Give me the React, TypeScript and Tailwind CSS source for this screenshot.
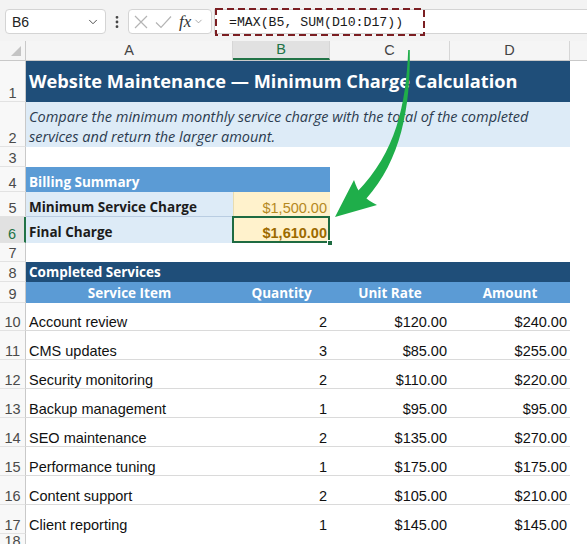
import type { ReactNode } from 'react';
import { ChevronDown, EllipsisVertical } from 'lucide-react';

const grid = 'grid grid-cols-[26px_207px_97px_120px_120px_1fr]';
const heading = "font-['Open_Sans',sans-serif] font-bold leading-none";
const body = "font-['Liberation_Sans',Arial,sans-serif] leading-none";

const services = [
  { item: 'Account review', qty: 2, rate: '$120.00', amount: '$240.00' },
  { item: 'CMS updates', qty: 3, rate: '$85.00', amount: '$255.00' },
  { item: 'Security monitoring', qty: 2, rate: '$110.00', amount: '$220.00' },
  { item: 'Backup management', qty: 1, rate: '$95.00', amount: '$95.00' },
  { item: 'SEO maintenance', qty: 2, rate: '$135.00', amount: '$270.00' },
  { item: 'Performance tuning', qty: 1, rate: '$175.00', amount: '$175.00' },
  { item: 'Content support', qty: 2, rate: '$105.00', amount: '$210.00' },
  { item: 'Client reporting', qty: 1, rate: '$145.00', amount: '$145.00' },
];

function RowHead({ n, selected }: { n: number; selected?: boolean }) {
  return (
    <div
      className={`${body} flex items-end justify-center pb-[1px] text-[14.5px] border-b border-b-[#e2e2e2] ${
        selected
          ? 'bg-[#e1e1e1] text-[#217346] border-r-2 border-r-[#217346]'
          : 'bg-[#f8f8f8] text-[#4a4a4a] border-r border-r-[#c9c9c9]'
      }`}
    >
      {n}
    </div>
  );
}

function Row({ n, h, selected, children }: { n: number; h: string; selected?: boolean; children?: ReactNode }) {
  return (
    <div className={`${grid} ${h}`}>
      <RowHead n={n} selected={selected} />
      {children}
    </div>
  );
}

function FormulaBar() {
  return (
    <div className="flex h-[41px] items-start bg-[#f3f3f3] pl-[5px] pt-[9px]">
      <div className="flex h-[25px] w-[101px] items-center justify-between rounded-[4px] border border-[#d4d4d4] bg-white pl-[6px] pr-[5px]">
        <span className={`${body} text-[14px] text-[#222]`}>B6</span>
        <ChevronDown size={14} strokeWidth={1.6} className="text-[#444]" />
      </div>
      <div className="flex h-[25px] w-[22px] items-center justify-center text-[#444]">
        <EllipsisVertical size={16} strokeWidth={2.2} />
      </div>
      <div className="flex h-[25px] w-[84px] items-center gap-[7px] rounded-[4px] border border-[#d4d4d4] bg-white pl-[5px]">
        <svg width="14" height="14" viewBox="0 0 14 14" className="text-[#b4b4b4]">
          <path d="M1 1 L13 13 M13 1 L1 13" stroke="currentColor" strokeWidth="1.2" fill="none" />
        </svg>
        <svg width="17" height="14" viewBox="0 0 17 14" className="text-[#b4b4b4]">
          <path d="M1 7.5 L6 12.5 L16 1.5" stroke="currentColor" strokeWidth="1.2" fill="none" />
        </svg>
        <span className="font-['Liberation_Serif',serif] text-[17px] italic leading-none text-[#333]">fx</span>
        <ChevronDown size={11} strokeWidth={1.5} className="-ml-[5px] text-[#888]" />
      </div>
      <div className="relative ml-[2px] h-[25px] flex-1 border-y border-l border-[#d4d4d4] bg-white">
        <span className="absolute left-[14px] top-[3px] font-['Liberation_Mono',monospace] text-[13.2px] text-[#1a1a1a]">
          =MAX(B5, SUM(D10:D17))
        </span>
        <svg width="212" height="28" className="absolute -left-[1px] -top-[2px]">
          <rect x="2" y="1" width="208" height="26" fill="none" stroke="#7b1e22" strokeWidth="2" strokeDasharray="7 4" />
        </svg>
      </div>
    </div>
  );
}

function ColumnHeaders() {
  const cell = `${body} flex items-center justify-center text-[14.5px] border-r border-[#d6d6d6]`;
  return (
    <div className={`${grid} h-[20px] border-b border-[#c9c9c9] bg-[#f5f5f5]`}>
      <div className="relative border-r border-[#c9c9c9]">
        <svg width="11" height="11" className="absolute bottom-[3px] right-[3px]">
          <path d="M10 0 L10 10 L0 10 Z" fill="#c4c4c4" />
        </svg>
      </div>
      <div className={`${cell} text-[#444]`}>A</div>
      <div className={`${cell} border-b-2 border-b-[#217346] bg-[#e1e1e1] text-[#217346]`}>B</div>
      <div className={`${cell} text-[#444]`}>C</div>
      <div className={`${cell} text-[#444]`}>D</div>
      <div />
    </div>
  );
}

function Arrow() {
  return (
    <svg width="587" height="544" className="pointer-events-none absolute left-0 top-0">
      <path
        d="M408.2 50 C406 105 396 152 357 192 L366 199 C401 160 410.5 108 409.8 50 Z"
        fill="#1fae4a"
      />
      <path d="M335 217 L354 180 C356 186 358 191 362 195 C367 199 371 202 377 205 Z" fill="#1fae4a" />
    </svg>
  );
}

export default function App() {
  return (
    <div className="relative h-screen w-full overflow-hidden bg-white">
      <FormulaBar />
      <ColumnHeaders />

      <Row n={1} h="h-[41px]">
        <div className={`${heading} col-span-4 flex items-center bg-[#1f4e79] px-[3px] text-[18.2px] text-white`}>
          Website Maintenance — Minimum Charge Calculation
        </div>
      </Row>
      <Row n={2} h="h-[45px]">
        <div className="col-span-4 flex items-end bg-[#ddebf7] px-[3px] font-['Open_Sans',sans-serif] text-[14.5px] italic leading-[20px] text-[#2c3b4f]">
          Compare the minimum monthly service charge with the total of the completed services and return the larger amount.
        </div>
      </Row>
      <Row n={3} h="h-[20px]" />
      <Row n={4} h="h-[25px]">
        <div className={`${heading} col-span-2 flex items-end bg-[#5b9bd5] px-[3px] pb-[3px] text-[13.5px] text-white`}>
          Billing Summary
        </div>
      </Row>
      <Row n={5} h="h-[25px]">
        <div className={`${heading} flex items-end border-b border-[#b9cde2] bg-[#ddebf7] px-[3px] pb-[1.5px] text-[13.5px] text-[#1c1c1c]`}>
          Minimum Service Charge
        </div>
        <div className={`${body} flex items-end justify-end border-b border-l border-[#e8dcb0] bg-[#fff2cc] px-[3px] pb-[1px] text-[14.5px] text-[#b5891e]`}>
          $1,500.00
        </div>
      </Row>
      <Row n={6} h="h-[26px]" selected>
        <div className={`${heading} flex items-end bg-[#ddebf7] px-[3px] pb-[3.5px] text-[13.5px] text-[#1c1c1c]`}>
          Final Charge
        </div>
        <div className={`${body} relative flex items-end justify-end bg-[#fff2cc] px-[3px] pb-[3px] text-[14.5px] font-bold text-[#9c6a00]`}>
          $1,610.00
          <div className="absolute -left-[1px] -top-[1px] bottom-0 right-0 border-2 border-[#1e6b41]" />
          <div className="absolute -bottom-[3px] -right-[3px] h-[6px] w-[6px] border border-white bg-[#1e6b41]" />
        </div>
      </Row>
      <Row n={7} h="h-[19px]" />
      <Row n={8} h="h-[20px]">
        <div className={`${heading} col-span-4 flex items-end bg-[#1f4e79] px-[3px] pb-[3px] text-[13.5px] text-white`}>
          Completed Services
        </div>
      </Row>
      <Row n={9} h="h-[21px]">
        {['Service Item', 'Quantity', 'Unit Rate', 'Amount'].map((label) => (
          <div key={label} className={`${heading} flex items-end justify-center bg-[#5b9bd5] pb-[3px] text-[13.5px] text-white`}>
            {label}
          </div>
        ))}
      </Row>
      {services.map((s, i) => {
        const line = i < services.length - 1 ? 'border-[#dadada]' : 'border-transparent';
        const cell = `${body} flex items-end border-b px-[3px] pb-[1px] text-[14.5px] text-[#111] ${line}`;
        return (
          <Row key={s.item} n={10 + i} h={i === 0 ? 'h-[28px]' : 'h-[29px]'}>
            <div className={cell}>{s.item}</div>
            <div className={`${cell} justify-end`}>{s.qty}</div>
            <div className={`${cell} justify-end`}>{s.rate}</div>
            <div className={`${cell} justify-end`}>{s.amount}</div>
          </Row>
        );
      })}
      <Row n={18} h="h-[12px]" />

      <Arrow />
    </div>
  );
}
